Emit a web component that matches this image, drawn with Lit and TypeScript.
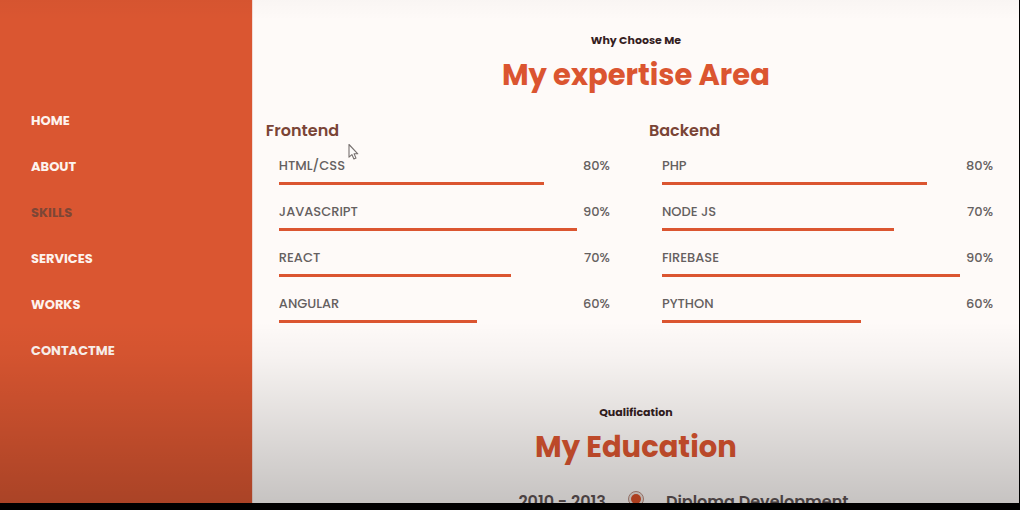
import { LitElement, html, css } from "lit";
import { customElement, property } from "lit/decorators.js";

interface Skill {
  name: string;
  level: number;
}

@customElement("skill-list")
class SkillList extends LitElement {
  @property() heading = "";
  @property({ attribute: false }) skills: Skill[] = [];

  static styles = css`
    :host {
      display: block;
      padding: 0 13px;
    }
    .heading {
      margin: 0;
      font-size: 16px;
      line-height: 24px;
      font-weight: 600;
      color: #7a4436;
    }
    .list {
      list-style: none;
      margin: 0;
      padding: 11px 13px 0;
    }
    .item {
      height: 46px;
    }
    .row {
      display: flex;
      justify-content: space-between;
      font-size: 13px;
      line-height: 24px;
      font-weight: 500;
      color: #65605f;
    }
    .track {
      padding-top: 4px;
    }
    .bar {
      height: 3px;
      background: #db5530;
    }
  `;

  render() {
    return html`
      <h3 class="heading">${this.heading}</h3>
      <ul class="list">
        ${this.skills.map(
          (s) => html`<li class="item">
            <div class="row"><span>${s.name}</span><span>${s.level}%</span></div>
            <div class="track">
              <div
                class="bar"
                role="progressbar"
                aria-label=${s.name}
                aria-valuenow=${s.level}
                style="width:${s.level}%"
              ></div>
            </div>
          </li>`
        )}
      </ul>
    `;
  }
}

@customElement("app-root")
class AppRoot extends LitElement {
  static styles = css`
    :host {
      display: block;
      font-family: Poppins, Inter, sans-serif;
    }
    .frame {
      position: relative;
      box-sizing: border-box;
      height: 100vh;
      display: grid;
      grid-template-columns: minmax(160px, 33fr) 100fr;
      grid-template-rows: minmax(0, 1fr);
      overflow: hidden;
      border-right: 1px solid #000;
      border-bottom: 7px solid #000;
      background: #fefaf8;
    }
    .sidebar {
      background: #da5631;
      padding: 97px 31px 0;
      border-right: 1px solid #f3dcd8;
    }
    .menu {
      list-style: none;
      margin: 0;
      padding: 0;
    }
    .entry {
      height: 46px;
      line-height: 46px;
    }
    .link {
      font-size: 13px;
      font-weight: 700;
      color: #fdf3ee;
      text-decoration: none;
    }
    .link.active {
      color: #7d4636;
    }
    .content {
      overflow: hidden;
    }
    .title {
      text-align: center;
    }
    .eyebrow {
      margin: 0;
      font-size: 11px;
      line-height: 20px;
      font-weight: 700;
      color: #35211f;
    }
    .headline {
      margin: 0;
      padding-top: 2px;
      font-size: 29px;
      line-height: 46px;
      font-weight: 700;
      color: #db5530;
    }
    .skills {
      padding-top: 30px;
    }
    .columns {
      display: grid;
      grid-template-columns: 1fr 1fr;
      padding-top: 21px;
    }
    .education {
      padding-top: 64px;
    }
    .timeline {
      display: grid;
      grid-template-columns: 1fr 60px 1fr;
      align-items: start;
      padding-top: 20px;
      font-size: 16px;
      line-height: 24px;
      font-weight: 600;
      color: #5e5354;
    }
    .years {
      text-align: right;
    }
    .dot {
      display: block;
      margin: 0 auto;
    }
    .shade {
      position: absolute;
      inset: 0;
      pointer-events: none;
      background: linear-gradient(
        rgba(0, 0, 0, 0.02),
        transparent 4%,
        transparent 64%,
        rgba(0, 0, 0, 0.03) 71%,
        rgba(0, 0, 0, 0.22)
      );
    }
    .cursor {
      position: absolute;
      left: 347px;
      top: 143px;
      pointer-events: none;
    }
  `;

  private menu = ["HOME", "ABOUT", "SKILLS", "SERVICES", "WORKS", "CONTACTME"];

  private frontend: Skill[] = [
    { name: "HTML/CSS", level: 80 },
    { name: "JAVASCRIPT", level: 90 },
    { name: "REACT", level: 70 },
    { name: "ANGULAR", level: 60 },
  ];

  private backend: Skill[] = [
    { name: "PHP", level: 80 },
    { name: "NODE JS", level: 70 },
    { name: "FIREBASE", level: 90 },
    { name: "PYTHON", level: 60 },
  ];

  render() {
    return html`
      <div class="frame">
        <nav class="sidebar">
          <ul class="menu">
            ${this.menu.map(
              (m) => html`<li class="entry">
                <a class="link ${m === "SKILLS" ? "active" : ""}" href="#${m.toLowerCase()}">${m}</a>
              </li>`
            )}
          </ul>
        </nav>
        <main class="content">
          <section class="skills" id="skills">
            <div class="title">
              <p class="eyebrow">Why Choose Me</p>
              <h2 class="headline">My expertise Area</h2>
            </div>
            <div class="columns">
              <skill-list heading="Frontend" .skills=${this.frontend}></skill-list>
              <skill-list heading="Backend" .skills=${this.backend}></skill-list>
            </div>
          </section>
          <section class="education">
            <div class="title">
              <p class="eyebrow">Qualification</p>
              <h2 class="headline">My Education</h2>
            </div>
            <div class="timeline">
              <span class="years">2010 - 2013</span>
              <svg class="dot" width="18" height="18" viewBox="0 0 18 18" aria-hidden="true">
                <circle cx="9" cy="9" r="7.5" fill="#efe4df" stroke="#b98c7f" stroke-width="1" />
                <circle cx="9" cy="9" r="5" fill="#db5028" />
              </svg>
              <span>Diploma Development</span>
            </div>
          </section>
        </main>
        <div class="shade"></div>
        <svg class="cursor" width="12" height="18" viewBox="0 0 12 18" aria-hidden="true">
          <path
            d="M2 1.5V14.2L4.9 11.6L6.9 16L9 15.1L7.1 10.8H10.8Z"
            fill="#fdfbfa"
            stroke="#77706f"
            stroke-width="1.1"
            stroke-linejoin="round"
          />
        </svg>
      </div>
    `;
  }
}
